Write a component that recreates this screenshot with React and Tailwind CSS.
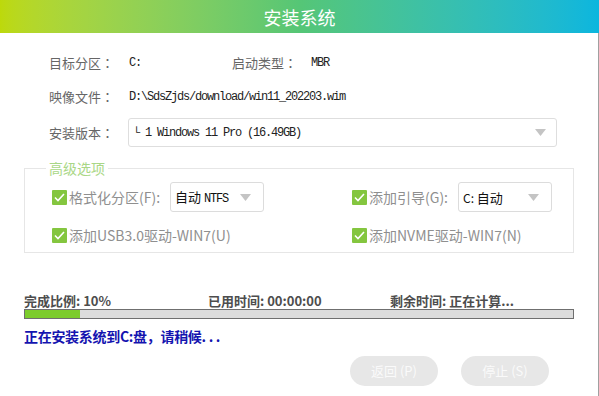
import React from "react";

const CJK = { fontFamily: '"Noto Sans CJK SC", "Noto Sans", sans-serif' };
const TC = { fontFamily: '"Noto Sans CJK TC", "Noto Sans CJK SC", sans-serif' };
const MONO = { fontFamily: '"Liberation Mono", "Noto Sans CJK SC", monospace' };

function Arrow() {
  return (
    <svg width="11" height="7" viewBox="0 0 11 7" className="shrink-0">
      <path d="M0 0 L11 0 L5.5 7 Z" fill="#c4c4c4" />
    </svg>
  );
}

function Check() {
  return (
    <div className="w-[15px] h-[15px] bg-[#84c63f] rounded-[1px] flex items-center justify-center shrink-0">
      <svg width="11" height="9" viewBox="0 0 11 9">
        <path d="M1 4.5 L4 7.5 L10 1" fill="none" stroke="#ffffff" strokeWidth="1.6" />
      </svg>
    </div>
  );
}

function Label({ w, children }) {
  return (
    <span className={`${w} text-[13px] text-[#666] flex items-center`}>
      {children}
      <span style={TC}>：</span>
    </span>
  );
}

function SmallSelect({ children }) {
  return (
    <div className="w-[94px] h-[30px] border border-[#dcdcdc] rounded-[3px] bg-white flex items-center justify-between pl-[4px] pr-[12px]">
      <span className="text-[13px] text-[#111] leading-none" style={CJK}>{children}</span>
      <Arrow />
    </div>
  );
}

export default function App() {
  return (
    <div className="w-[599px] h-[396px] bg-white flex flex-col overflow-hidden" style={CJK}>
      <div className="h-[33px] w-full bg-linear-to-r from-[#bdd90a] via-[#55c676] to-[#0bb6de] flex items-center justify-center">
        <span className="text-[18px] text-white leading-none" style={CJK}>安装系统</span>
      </div>
      <div className="flex-1 border-r border-[#a0a0a0] w-[599px] flex flex-col">
        {/* Row 1 */}
        <div className="mt-[21px] h-[18px] flex items-center pl-[49px]">
          <Label w="w-[80px]">目标分区</Label>
          <span className="w-[103px] text-[12px] text-[#222] tracking-[-1.2px]" style={MONO}>C:</span>
          <Label w="w-[79px]">启动类型</Label>
          <span className="text-[12px] text-[#222] tracking-[-1.2px]" style={MONO}>MBR</span>
        </div>
        {/* Row 2 */}
        <div className="mt-[16px] h-[18px] flex items-center pl-[49px]">
          <Label w="w-[80px]">映像文件</Label>
          <span className="text-[12px] text-[#222] tracking-[-1.2px]" style={MONO}>D:\SdsZjds/download/win11_202203.wim</span>
        </div>
        {/* Row 3 */}
        <div className="mt-[12px] h-[29px] flex items-center pl-[49px]">
          <Label w="w-[79px]">安装版本</Label>
          <div className="w-[429px] h-[29px] border border-[#dedede] rounded-[3px] flex items-center justify-between pl-[4px] pr-[10px]">
            <span className="text-[12px] text-[#222] tracking-[-1.2px] whitespace-pre" style={MONO}>└ 1 Windows 11 Pro (16.49GB)</span>
            <Arrow />
          </div>
        </div>
        {/* Advanced options */}
        <div className="mt-[21px] ml-[24px] w-[550px] h-[85px] border border-[#e6e6e6] flex flex-col">
          <div className="-mt-[10px] ml-[21px] w-fit px-[3px] bg-white h-[18px] flex items-center">
            <span className="text-[14px] text-[#a9d786] leading-none">高级选项</span>
          </div>
          <div className="mt-[5px] flex items-center pl-[27px] h-[30px]">
            <div className="w-[300px] flex items-center">
              <Check />
              <span className="ml-[2px] w-[101px] text-[14px] text-[#8f8f8f]">格式化分区(F):</span>
              <SmallSelect>
                <span>自动 </span>
                <span className="text-[12px] tracking-[-1.2px]" style={MONO}>NTFS</span>
              </SmallSelect>
            </div>
            <div className="flex items-center">
              <Check />
              <span className="ml-[2px] w-[89px] text-[14px] text-[#8f8f8f]">添加引导(G):</span>
              <SmallSelect>
                <span className="text-[12px]">C: </span>
                <span>自动</span>
              </SmallSelect>
            </div>
          </div>
          <div className="mt-[13px] flex items-center pl-[27px] h-[20px]">
            <div className="w-[300px] flex items-center">
              <Check />
              <span className="ml-[2px] text-[14px] text-[#8f8f8f]">添加USB3.0驱动-WIN7(U)</span>
            </div>
            <div className="flex items-center">
              <Check />
              <span className="ml-[2px] text-[14px] text-[#8f8f8f]">添加NVME驱动-WIN7(N)</span>
            </div>
          </div>
        </div>
        {/* Progress */}
        <div className="mt-[39px] ml-[24px] h-[17px] flex items-center text-[13px] font-bold text-[#4d4d4d]">
          <span className="w-[184px]">完成比例: 10%</span>
          <span className="w-[182px]">已用时间: 00:00:00</span>
          <span>剩余时间: 正在计算...</span>
        </div>
        <div className="ml-[24px] w-[550px] h-[10px] border border-[#6f6f6f] bg-[#dcdcdc] flex">
          <div className="h-full bg-[#7ccc2c]" style={{ width: "10%" }} />
        </div>
        <div className="mt-[9px] ml-[24px] h-[17px] flex items-center">
          <span className="text-[14px] font-bold text-[#1414b0] tracking-[-0.3px]">正在安装系统到C:盘，请稍候. . .</span>
        </div>
        <div className="mt-[11px] ml-[350px] flex gap-[23px]">
          <div className="w-[88px] h-[30px] rounded-full bg-[#e7e7e7] flex items-center justify-center text-[13px] text-[#fafafa]">返回 (P)</div>
          <div className="w-[88px] h-[30px] rounded-full bg-[#e7e7e7] flex items-center justify-center text-[13px] text-[#fafafa]">停止 (S)</div>
        </div>
      </div>
    </div>
  );
}
